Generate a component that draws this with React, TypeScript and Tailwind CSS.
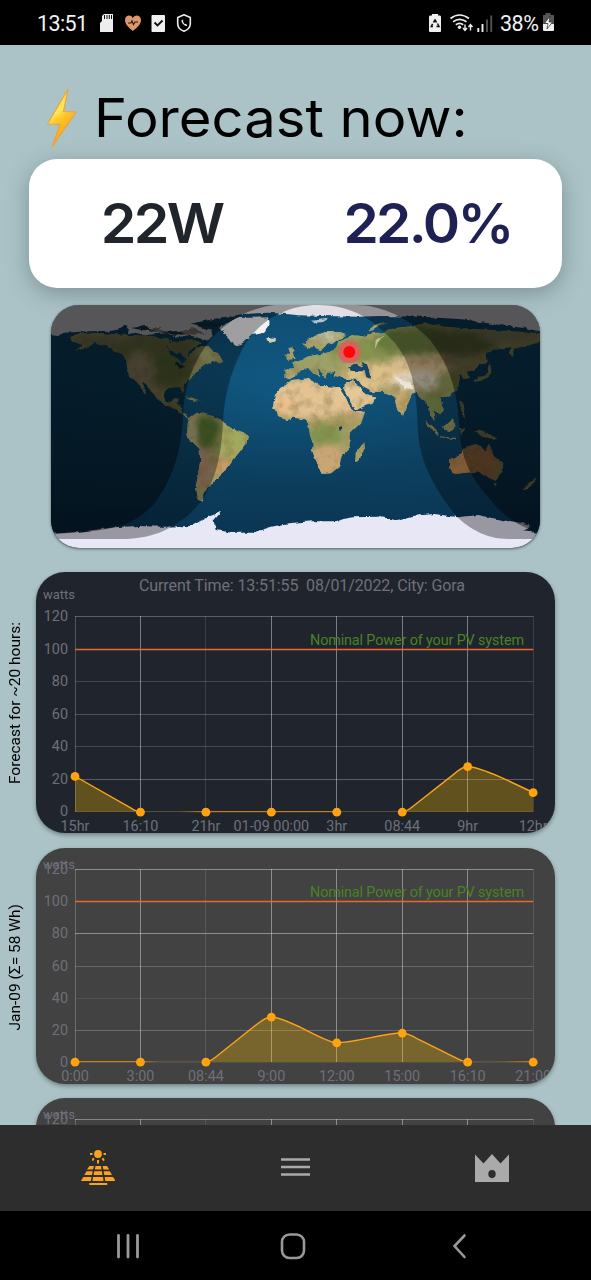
import React from "react";

const DIM = 0.3;

type ChartProps = {
  id: string;
  height: number;
  top: number;
  bottom: number;
  background: string;
  title?: string;
  unitY: number;
  labels: string[];
  values: number[];
  line: string;
  rows: number[];
  snap?: number;
  fades?: { from: number; to: number; a: number; b: number }[];
};

const X0 = 39;
const STEP = 65.45;
const COLS = [0.55, 1, DIM, 1, 1, 1, 1, DIM];

function Chart({ id, height, top, bottom, background, title, unitY, labels, values, line, rows, snap = 0, fades = [] }: ChartProps) {
  const y = (v: number) => bottom - (v / 120) * (bottom - top);
  const px = (i: number) => X0 + i * STEP;
  const end = px(7);
  return (
    <div className={`w-[519px] shrink-0 overflow-hidden rounded-[29px] shadow-[0_2px_4px_rgba(0,0,0,0.35)] ${background}`}>
      <svg width={519} height={height} viewBox={`0 0 519 ${height}`} fontFamily="Roboto, sans-serif" className="block">
        {title && (
          <text x={266} y={19} fontSize={16} textLength={326} textAnchor="middle" fill="#6e7079" xmlSpace="preserve">
            {title}
          </text>
        )}
        <text x={7} y={unitY} fontSize={13} textLength={32} fill="#6e7079">watts</text>
        {rows.map((o, k) => (
          <React.Fragment key={k}>
            <line x1={X0} x2={end} y1={Math.round(y(k * 20)) - 0.5 + snap} y2={Math.round(y(k * 20)) - 0.5 + snap} stroke="#e4e4e8" strokeOpacity={o * 0.46} />
            <text x={32} y={y(k * 20) + 4 + snap} fontSize={14.4} textAnchor="end" fill="#6e7079">{k * 20}</text>
          </React.Fragment>
        ))}
        {COLS.map((o, i) => (
          <line key={i} x1={Math.floor(px(i)) + 0.5} x2={Math.floor(px(i)) + 0.5} y1={top - 1 + snap} y2={bottom} stroke="#e4e4e8" strokeOpacity={o * 0.46} />
        ))}
        <text x={274} y={top + 27.5 + snap / 2} fontSize={14.4} textLength={214} fill="#498223">Nominal Power of your PV system</text>
        <line x1={X0} x2={end} y1={Math.round(y(100)) - 0.5 + snap} y2={Math.round(y(100)) - 0.5 + snap} stroke="#f0642f" strokeWidth={1.5} />
        <path d={`${line} L${end} ${bottom} L${X0} ${bottom} Z`} fill="#ffbf00" fillOpacity={0.29} />
        <defs>
          <clipPath id={`plot-${id}`}><rect x="0" y="0" width="519" height={bottom - 0.8} /></clipPath>
          {fades.map((f, i) => (
            <linearGradient key={i} id={`fade-${id}-${i}`} gradientUnits="userSpaceOnUse" x1={f.from} x2={f.to} y1="0" y2="0">
              <stop stopColor="#b57812" stopOpacity={f.a} />
              <stop offset="1" stopColor="#b57812" stopOpacity={f.b} />
            </linearGradient>
          ))}
        </defs>
        {fades.map((f, i) => (
          <rect key={i} x={f.from} width={f.to - f.from} y={bottom - 1} height={1.2} fill={`url(#fade-${id}-${i})`} />
        ))}
        <g clipPath={`url(#plot-${id})`}>
          <path d={line} fill="none" stroke="#fba318" strokeWidth={1.4} />
        </g>
        {values.map((v, i) => (
          <circle key={i} cx={px(i)} cy={y(v) + 0.2} r={4.4} fill="#ffa20f" />
        ))}
        {labels.map((t, i) => (
          <text key={t} x={px(i)} y={bottom + 19} fontSize={14.4} textAnchor="middle" fill="#6e7079">{t}</text>
        ))}
      </svg>
    </div>
  );
}

const LAND = [
  "M75 112L100 100L150 98L245 105L320 108L400 125L440 118L470 130L440 140L430 165L438 172L425 178L405 160L372 150L368 130L385 122L372 124L366 140L375 165L400 178L412 192L425 180L440 160L450 140L490 138L505 155L520 160L535 186L518 190L502 182L480 198L462 208L446 226L430 240L416 258L414 276L406 262L380 262L360 270L356 290L364 303L382 305L390 294L402 296L396 312L408 318L412 338L432 350L420 350L395 330L362 316L342 304L326 282L306 258L290 245L306 285L296 275L272 240L252 232L246 200L244 180L214 155L186 136L150 130L112 148L92 154L116 136L88 126Z",
  "M660 118L672 112L692 114L692 121L675 125Z",
  "M432 352L455 335L490 345L530 358L545 380L585 395L610 404L604 428L586 452L566 478L548 504L524 526L508 542L492 562L476 578L472 606L456 598L450 570L458 530L466 480L464 450L442 428L425 402L428 374Z",
  "M420 288L445 294L458 304L476 306L450 304L425 292Z",
  "M690 285L715 258L740 240L794 235L804 248L832 258L884 262L893 272L912 314L930 335L960 335L950 366L917 398L917 440L890 468L882 500L858 520L830 522L814 486L801 450L803 430L794 402L790 374L782 358L745 353L722 362L700 346L684 320Z",
  "M930 486L932 458L955 430L957 446L942 484Z",
  "M894 260L920 240L946 262L962 282L994 290L980 312L932 329L918 304Z",
  "M718 234L718 206L748 205L742 190L765 182L784 172L806 166L840 160L872 148L880 124L900 114L930 106L965 110L980 100L1020 96L1050 84L1100 78L1150 68L1200 80L1300 88L1400 94L1485 100L1485 126L1450 136L1412 144L1402 172L1390 158L1400 142L1350 146L1322 162L1325 186L1300 196L1288 212L1266 214L1272 236L1258 236L1246 222L1242 246L1236 272L1206 290L1190 292L1196 328L1180 346L1168 328L1172 362L1156 344L1144 306L1126 292L1110 274L1092 300L1074 348L1060 330L1050 290L1015 276L980 275L955 262L942 240L920 238L890 234L866 226L872 216L845 218L846 236L832 220L812 200L826 230L808 224L790 204L765 208L752 230L734 238Z",
  "M774 132L800 112L840 96L880 96L905 106L880 118L862 132L850 128L838 142L828 154L812 148L806 138L790 146Z",
  "M725 172L718 164L736 164L730 144L742 142L752 176L726 180Z",
  "M970 90L988 76L1030 68L1004 78L982 92Z",
  "M1215 478L1250 460L1266 440L1290 432L1308 438L1318 456L1332 432L1352 470L1375 490L1372 516L1352 542L1324 530L1296 514L1250 520L1226 526L1216 504Z",
  "M1288 390L1320 396L1356 418L1330 414L1300 402Z",
  "M1141 360L1160 378L1182 402L1176 404L1152 384Z",
  "M1182 408L1232 414L1230 418L1184 412Z",
  "M1194 380L1226 353L1232 378L1214 396L1198 392Z",
  "M1242 380L1258 386L1244 410L1250 392Z",
  "M1280 246L1300 232L1324 226L1332 188L1340 210L1330 236L1302 244Z",
  "M1242 300L1252 312L1260 352L1252 344Z",
  "M1432 568L1452 550L1474 532L1466 552L1438 572Z",
  "M1346 550L1356 550L1350 558Z",
];

const GREENLAND = "M525 84L550 66L580 54L670 52L674 72L655 98L620 106L592 130L574 138L556 128L544 104Z";

const BLOBS: [number, number, number, number, string, number][] = [
  [350, 150, 170, 50, "#77834f", 0.9],
  [370, 215, 65, 50, "#6f8541", 0.9],
  [285, 210, 45, 55, "#b9a67e", 1],
  [160, 125, 70, 16, "#8b8b66", 1],
  [335, 280, 35, 30, "#b8aa74", 1],
  [480, 160, 40, 30, "#adb073", 1],
  [480, 400, 50, 50, "#52742e", 1],
  [560, 425, 46, 50, "#a3a85e", 1],
  [475, 505, 25, 65, "#b58f72", 1],
  [443, 420, 12, 80, "#d9c09a", 0.8],
  [535, 500, 30, 26, "#c99c66", 1],
  [675, 118, 30, 14, "#e4e4e0", 1],
  [790, 295, 135, 60, "#e3c394", 1],
  [720, 320, 35, 24, "#ecc08e", 1],
  [830, 366, 125, 14, "#ad9c5c", 0.9],
  [840, 408, 50, 38, "#7f9550", 1],
  [845, 480, 55, 48, "#c9a676", 1],
  [930, 330, 34, 20, "#e3ad84", 0.9],
  [935, 280, 60, 50, "#e6c797", 1],
  [820, 190, 90, 32, "#9ca067", 1],
  [830, 110, 60, 14, "#c9c8b0", 0.9],
  [960, 150, 110, 35, "#84944f", 1],
  [1120, 125, 130, 44, "#647a3b", 1],
  [1250, 130, 100, 38, "#66723f", 1],
  [1400, 108, 100, 20, "#8e8e66", 1],
  [990, 225, 100, 36, "#dcc088", 1],
  [1130, 195, 100, 30, "#d6b98b", 1],
  [1120, 242, 80, 24, "#e0d7c6", 1],
  [1220, 250, 45, 35, "#8f9a55", 1],
  [1068, 300, 30, 35, "#c4a66d", 1],
  [1170, 310, 35, 35, "#839a55", 1],
  [1300, 490, 100, 55, "#c48a55", 1],
  [1370, 510, 18, 35, "#949a60", 0.8],
];

const POLAR = "M0 0H1500V98L1440 84L1370 76L1250 58L1130 50L1000 48L940 50L840 48L760 46L725 42L670 38L596 42L520 54L470 64L436 72L500 92L506 108L490 124L455 112L430 106L400 112L360 100L300 106L262 96L246 100L250 76L200 92L130 94L60 98L40 108L0 104Z";
const ANTARCTIC = "M0 702L100 696L210 682L280 678L350 680L440 678L486 652L528 636L506 662L512 690L560 698L622 698L680 680L730 670L800 664L870 664L920 652L1000 650L1055 660L1100 648L1168 642L1240 652L1300 645L1370 660L1450 672L1460 680L1430 694L1500 700V760H0Z";

function WorldMap() {
  return (
    <div className="h-[243px] w-[489px] overflow-hidden rounded-[28px] bg-[#0d3c5a] shadow-[0_1px_3px_rgba(0,0,0,0.5)]">
      <svg width={489} height={243} viewBox="18 15 1467 729" className="block">
        <defs>
          <radialGradient id="sea" cx="0.5" cy="0.38" r="0.6">
            <stop stopColor="#105a84" />
            <stop offset="0.6" stopColor="#104d72" />
            <stop offset="1" stopColor="#0f4b74" />
          </radialGradient>
          <linearGradient id="depth" x2="0" y2="1">
            <stop offset="0.3" stopColor="#021624" stopOpacity="0" />
            <stop offset="0.9" stopColor="#021624" stopOpacity="0.4" />
          </linearGradient>
          <filter id="coast" x="-5%" y="-5%" width="110%" height="110%">
            <feTurbulence type="fractalNoise" baseFrequency="0.045" numOctaves="4" seed="4" />
            <feDisplacementMap in="SourceGraphic" scale="13" xChannelSelector="R" yChannelSelector="G" />
          </filter>
          <filter id="soft"><feGaussianBlur stdDeviation="10" /></filter>
          <filter id="relief" x="0" y="0" width="100%" height="100%">
            <feTurbulence type="fractalNoise" baseFrequency="0.03" numOctaves="5" seed="9" />
            <feColorMatrix values="0 0 0 0 0.24  0 0 0 0 0.18  0 0 0 0 0.06  2.4 0 0 0 -1.1" />
          </filter>
          <clipPath id="land"><path d={LAND.join("")} /></clipPath>
        </defs>
        <rect width="1500" height="760" fill="url(#sea)" />
        <rect width="1500" height="760" fill="url(#depth)" />
        <g filter="url(#coast)">
          <g clipPath="url(#land)">
            <rect width="1500" height="760" fill="#a39f68" />
            <g filter="url(#soft)">
              {BLOBS.map(([cx, cy, rx, ry, fill, opacity], i) => (
                <ellipse key={i} cx={cx} cy={cy} rx={rx} ry={ry} fill={fill} opacity={opacity} />
              ))}
            </g>
            <rect width="1500" height="760" filter="url(#relief)" opacity="0.5" />
          </g>
          <path d={GREENLAND} fill="#f2f1f4" />
          <path d="M910 202L930 190L962 204L972 214L940 214L914 212ZM950 186L966 192L978 236L964 232L956 206Z" fill="#12466a" />
          <path d="M882 382L890 378L892 390L882 392ZM872 400L876 416ZM392 188L420 196L410 204L390 196Z" fill="#12384e" />
          <path d="M1050 228L1075 240L1098 252L1106 268L1080 264L1062 248Z" fill="#ece4d6" />
          <path d="M990 148L992 120L1020 102L1000 122Z" fill="#bcc49a" />
          <path d={POLAR} fill="#e2dfe4" />
          <path d={ANTARCTIC} fill="#e8e7f6" />
          <path d="M290 88L350 80L340 92L410 94L440 84L480 100L450 104L380 104L330 98Z" fill="#9c8f88" />
          <path d="M800 62L850 56L834 66L812 68Z" fill="#b8c2cc" />
          <path d="M258 84L300 78L330 92L290 90ZM440 70L500 66L540 74L520 82L480 84ZM350 98L400 92L420 102L390 104Z" fill="#163d55" />
        </g>
        <path fill="#000" fillOpacity="0.34" d="M0 0H1500V717H1390C1320 717 1250 680 1205 610C1150 530 1122 470 1118 380C1115 290 1108 200 1050 130C990 60 920 15 820 15C730 15 655 55 605 125C565 190 540 270 534 360C530 480 505 580 430 645C375 690 320 717 230 717H0Z" />
        <path fill="#000" fillOpacity="0.42" d="M0 0H1500V700C1420 685 1370 645 1320 580C1265 515 1246 460 1242 370C1238 270 1210 190 1155 120C1095 55 1010 15 930 15H690C600 25 530 75 484 135C440 200 418 260 414 350C410 450 385 535 325 615C270 670 220 684 150 692L0 705Z" />
        <circle cx="913" cy="156" r="34" fill="#dc5f5c" fillOpacity="0.92" />
        <circle cx="913" cy="156" r="18" fill="#ff0505" />
      </svg>
    </div>
  );
}

function Bolt() {
  return (
    <svg width="32" height="62" viewBox="0 0 32 62" className="shrink-0">
      <defs>
        <linearGradient id="bolt" x1="0" y1="0" x2="0.4" y2="1">
          <stop stopColor="#f9c52f" />
          <stop offset="0.45" stopColor="#ffe85a" />
          <stop offset="0.6" stopColor="#fdc42b" />
          <stop offset="1" stopColor="#fb9c13" />
        </linearGradient>
      </defs>
      <path d="M22 2L1.5 37L14 37.5L6 60L30 25L17.5 24.5Z" fill="url(#bolt)" stroke="#e9a63a" strokeWidth="1.2" strokeLinejoin="round" />
    </svg>
  );
}

function StatusBar() {
  return (
    <div className="flex h-[45px] shrink-0 items-center bg-black pl-[37px] pr-[36px] font-[Roboto,sans-serif] text-[21.5px] text-[#f2f2f2]">
      <span className="w-[51px] pt-[3px] tracking-[-0.6px]">13:51</span>
      <svg width="100" height="20" viewBox="99 12 100 20" className="ml-[11px]">
        <path d="M104 13H113V31H100V22L102 20V15Z" fill="#ededed" />
        <path d="M104.5 14V18M107 14V18M109.3 14V18M111.5 14V18" stroke="#111" strokeWidth="1" />
        <path d="M132.8 30C128 26 125 23 125 19C125 14 131 13 132.8 17C135 13 141 14 141 19C141 23 138 26 132.8 30Z" fill="#df9668" />
        <path d="M128 22H131L132 20L133.5 23.5L135 21H138" stroke="#241a16" fill="none" strokeWidth="1.2" />
        <rect x="151.5" y="14" width="13.5" height="17" rx="1" fill="#f0f0f0" />
        <path d="M154.5 21.5L157.5 24.5L162.5 19.5" stroke="#111" fill="none" strokeWidth="1.8" />
        <path d="M184 13.8L190.3 16.5V23Q190 28 184 30.3Q178 28 177.7 23V16.5Z" stroke="#ededed" fill="none" strokeWidth="1.6" strokeLinejoin="round" />
        <path d="M182 18.5Q180.5 20 183 23Q186 26 187.3 24.5L186 22.8L184.8 23.2L183 20.8L183.5 19.8Z" fill="#ededed" />
      </svg>
      <svg width="66" height="20" viewBox="428 12 66 20" className="ml-auto">
        <path d="M432 14V13H438V14.5H440Q441 14.5 441 16V30Q441 31 440 31H430Q429 31 429 30V16Q429 14.5 430 14.5H432Z" fill="#f0f0f0" />
        <path d="M433.5 21.5L435 19L436.5 21.5M437.5 22.5L439 25.5H436.5M433 25.5H431.2L432.6 22.8" stroke="#111" fill="none" strokeWidth="1.5" />
        <g fill="none" stroke="#ededed" strokeWidth="1.7">
          <path d="M450.5 17.5Q459.5 10.5 469 17.5M453 20.8Q459.5 15.8 466.5 20.8M455.8 23.8Q459.5 21 463.3 23.8" />
          <path d="M465 23.5V29M463 27L465 29.5L467 27M470.5 29.5V24M468.5 26L470.5 23.5L472.5 26" strokeWidth="1.4" />
        </g>
        <circle cx="459.5" cy="26.3" r="1.7" fill="#ededed" />
        <path d="M478.3 27V31M482.5 23V31" stroke="#ededed" strokeWidth="1.9" />
        <path d="M487 18.5V31M491.2 14.5V31" stroke="#505050" strokeWidth="1.9" />
      </svg>
      <span className="ml-[6px] w-[40px] pt-[3px] tracking-[-0.5px]">38%</span>
      <svg width="13" height="19" viewBox="0 0 13 19" className="ml-[2px]">
        <path d="M3.5 0H8.5V2H12V12H1V2H3.5Z" fill="#555" />
        <path d="M1 11H12V17Q12 18 11 18H2Q1 18 1 17Z" fill="#f0f0f0" />
        <path d="M8 3L2.5 10.5H6L5 16L10.5 9H7Z" fill="#fff" stroke="#222" strokeWidth=".7" />
      </svg>
    </div>
  );
}

function SideLabel({ children }: { children: string }) {
  return (
    <div className="flex w-[36px] shrink-0 items-center justify-center pr-[4px] pt-[2px] font-[Roboto,sans-serif] text-[15.5px] leading-none text-black">
      <span className="rotate-180 whitespace-nowrap [writing-mode:vertical-rl]">{children}</span>
    </div>
  );
}

const scales = (b: number, t: number) => ({
  x: (i: number) => X0 + i * STEP,
  y: (v: number) => b - (v / 120) * (b - t),
});

const c1 = scales(240, 45);
const FIRST = `M${c1.x(0)} ${c1.y(22)} L${c1.x(0.85)} ${c1.y(2.5)} Q${c1.x(0.94)} ${c1.y(0)} ${c1.x(1)} ${c1.y(0)} L${c1.x(5)} ${c1.y(0)} Q${c1.x(5.06)} ${c1.y(0)} ${c1.x(5.18)} ${c1.y(4)} L${c1.x(5.78)} ${c1.y(23)} Q${c1.x(5.92)} ${c1.y(28)} ${c1.x(6)} ${c1.y(28)} Q${c1.x(6.12)} ${c1.y(28)} ${c1.x(6.5)} ${c1.y(21.5)} L${c1.x(7)} ${c1.y(12)}`;
const c2 = scales(214, 21);
const SECOND = `M${c2.x(0)} ${c2.y(0)} L${c2.x(2)} ${c2.y(0)} Q${c2.x(2.06)} ${c2.y(0)} ${c2.x(2.18)} ${c2.y(4)} L${c2.x(2.78)} ${c2.y(23.5)} Q${c2.x(2.92)} ${c2.y(28)} ${c2.x(3)} ${c2.y(28)} Q${c2.x(3.12)} ${c2.y(28)} ${c2.x(3.5)} ${c2.y(20.5)} Q${c2.x(3.9)} ${c2.y(12)} ${c2.x(4)} ${c2.y(12)} C${c2.x(4.3)} ${c2.y(12)} ${c2.x(4.7)} ${c2.y(18)} ${c2.x(5)} ${c2.y(18)} Q${c2.x(5.08)} ${c2.y(18)} ${c2.x(5.25)} ${c2.y(14)} L${c2.x(5.85)} ${c2.y(2)} Q${c2.x(5.94)} ${c2.y(0)} ${c2.x(6)} ${c2.y(0)} L${c2.x(7)} ${c2.y(0)}`;
const DAY_LABELS = ["0:00", "3:00", "08:44", "9:00", "12:00", "15:00", "16:10", "21:00"];
const DAY_VALUES = [0, 0, 0, 28, 12, 18, 0, 0];

export default function App() {
  return (
    <div className="flex h-[1280px] w-[591px] flex-col overflow-hidden bg-[#abc3c6]">
      <StatusBar />
      <main className="flex min-h-0 flex-1 flex-col overflow-hidden">
        <header className="flex h-[113.5px] shrink-0 pl-[46px] pt-[42px]">
          <Bolt />
          <h1 className="ml-[16px] mt-[-1px] origin-left scale-x-[1.05] whitespace-nowrap font-[Inter,sans-serif] text-[53.5px] font-normal leading-[64px] text-black">Forecast now:</h1>
        </header>
        <section className="mx-[29px] grid h-[129.5px] shrink-0 grid-cols-2 items-center rounded-[28px] bg-white font-[Inter,sans-serif] text-[55px] font-semibold shadow-[0_6px_22px_rgba(40,60,65,0.35)]">
          <span className="origin-left scale-x-[1.04] pl-[69px] tracking-[-2.6px] text-[#20252b]">22W</span>
          <span className="origin-left scale-x-[1.03] pl-[46px] tracking-[-2.5px] text-[#1f2154]">22.0%</span>
        </section>
        <div className="mt-[17px] flex shrink-0 justify-center"><WorldMap /></div>
        <div className="mt-[24px] flex shrink-0">
          <SideLabel>Forecast for ~20 hours:</SideLabel>
          <Chart id="now" height={261} top={45} bottom={240} background="bg-[#20252d]" title="Current Time: 13:51:55  08/01/2022, City: Gora" unitY={27}
            labels={["15hr", "16:10", "21hr", "01-09 00:00", "3hr", "08:44", "9hr", "12hr"]}
            values={[22, 0, 0, 0, 0, 0, 28, 12]} line={FIRST} rows={[0.25, 0.65, 0.4, 0.5, 0.4, 0, 0.65]}
            fades={[{ from: 145, to: 170, a: 0, b: 1 }, { from: 170, to: 301, a: 1, b: 1 }]} />
        </div>
        <div className="mt-[15px] flex shrink-0">
          <SideLabel>Jan-09 (Σ= 58 Wh)</SideLabel>
          <Chart id="day" height={236} top={21} bottom={214} background="bg-[#424242]" unitY={21} labels={DAY_LABELS} snap={1}
            values={DAY_VALUES} line={SECOND} rows={[0.15, 0.55, 0.2, 0.5, 1, 0, 1]}
            fades={[{ from: 39, to: 104, a: 1, b: 1 }, { from: 104, to: 124, a: 0.8, b: 0 }, { from: 465, to: 497, a: 0, b: 1 }]} />
        </div>
        <div className="mt-[14px] flex shrink-0 pl-[36px]">
          <Chart id="next" height={235} top={21} bottom={214} background="bg-[#424242]" unitY={21} labels={DAY_LABELS} snap={1}
            values={DAY_VALUES} line={SECOND} rows={[0.15, 0.55, 0.2, 0.5, 1, 0, 0.9]} />
        </div>
      </main>
      <nav className="flex h-[86.5px] shrink-0 items-center justify-between bg-[#2d2d2d] pl-[80px] pr-[81px]">
        <svg width="36" height="38" viewBox="80 1149 36 38">
          <g fill="#fca31c">
            <circle cx="98" cy="1154" r="3.9" />
            <path d="M90 1153H92.5V1155H90ZM103.5 1153H106V1155H103.5ZM93 1157.5L94.5 1159L93 1161.2L91.8 1160ZM103 1157.5L104.8 1160L103.5 1161.2L101.7 1159ZM97 1160H99V1163.5H97Z" />
            <path d="M89.5 1166H94L93 1169.5H87ZM95.5 1166H101L101.5 1169.5H94.8ZM102.7 1166H107L109.2 1169.5H103.4ZM86.5 1171.2H92.7L92 1175H84.3ZM94.3 1171.2H101.9L102.5 1175H93.6ZM103.6 1171.2H109.8L112 1175H104.3ZM83.5 1177H91.5L90.8 1181H81.3V1180ZM93 1177H103L103.5 1181H92.5ZM104.7 1177H113L115 1180V1181H105.3ZM89.3 1183H107.2V1185H89.3Z" />
          </g>
        </svg>
        <svg width="31" height="20" viewBox="0 0 31 20" className="mb-[2px]"><path d="M1 2.5H30M1 10H30M1 17.5H30" stroke="#aaa" strokeWidth="2.6" /></svg>
        <svg width="36" height="30" viewBox="0 0 36 30"><path fillRule="evenodd" d="M1 1.5L9.5 10.5L18 1L26.5 10.5L35 1.5V29H1ZM18 17A3.7 4.1 0 1 0 18 25.2A3.7 4.1 0 1 0 18 17Z" fill="#aaa" /></svg>
      </nav>
      <div className="flex h-[69px] shrink-0 items-center justify-between bg-black pl-[116px] pr-[124px]">
        <svg width="24" height="26" viewBox="0 0 24 26"><path d="M2.5 2.5V24M12 2.5V24M21.5 2.5V24" stroke="#999" strokeWidth="2.8" strokeLinecap="round" /></svg>
        <svg width="26" height="28" viewBox="0 0 26 28" className="mr-[6px]"><rect x="2" y="2.5" width="22" height="23.5" rx="7.5" fill="none" stroke="#999" strokeWidth="2.6" /></svg>
        <svg width="15" height="26" viewBox="0 0 15 26"><path d="M12.5 2.5L2.5 13L12.5 24" fill="none" stroke="#999" strokeWidth="2.6" strokeLinecap="round" /></svg>
      </div>
    </div>
  );
}
